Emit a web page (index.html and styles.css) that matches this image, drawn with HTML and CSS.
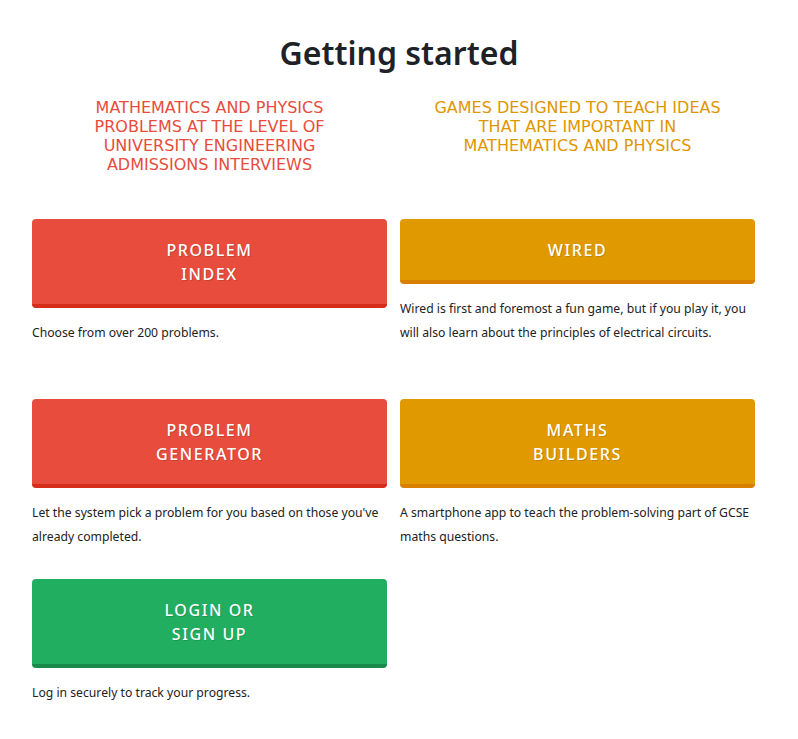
FILE: index.html
```html
<html>
	<head>
		<title>Getting started</title>
		<link rel="stylesheet" href="styles.css">
	</head>
	<body>
		<h1>Getting started</h1>
		<div class="page">
			<div class="grid">
				<div class="intro red">
					MATHEMATICS AND PHYSICS<br>
					PROBLEMS AT THE LEVEL OF<br>
					UNIVERSITY ENGINEERING<br>
					ADMISSIONS INTERVIEWS
				</div>
				<div class="intro orange">
					GAMES DESIGNED TO TEACH IDEAS<br>
					THAT ARE IMPORTANT IN<br>
					MATHEMATICS AND PHYSICS
				</div>

				<div class="cell">
					<a class="btn btn-red" href="#">PROBLEM<br>INDEX</a>
					<p>Choose from over 200 problems.</p>
				</div>
				<div class="cell">
					<a class="btn btn-orange" href="#">WIRED</a>
					<p>Wired is first and foremost a fun game, but if you play it, you will also learn about the principles of electrical circuits.</p>
				</div>

				<div class="cell">
					<a class="btn btn-red" href="#">PROBLEM<br>GENERATOR</a>
					<p>Let the system pick a problem for you based on those you've already completed.</p>
				</div>
				<div class="cell">
					<a class="btn btn-orange" href="#">MATHS<br>BUILDERS</a>
					<p>A smartphone app to teach the problem-solving part of GCSE maths questions.</p>
				</div>

				<div class="cell">
					<a class="btn btn-green" href="#">LOGIN OR<br>SIGN UP</a>
					<p>Log in securely to track your progress.</p>
				</div>
			</div>
		</div>
	</body>
</html>
```

FILE: styles.css
```css
body {
	margin: 0;
	background: #fff;
	font-family: "Noto Sans", sans-serif;
	color: #222;
}

h1 {
	margin: 0;
	padding: 32px 0 24px 0;
	font-family: "Noto Sans", sans-serif;
	font-size: 32px;
	line-height: 42px;
	font-weight: 600;
	text-align: center;
	color: #1e2226;
}

.page {
	width: 724px;
	margin: 0 0 0 32px;
}

.grid {
	display: grid;
	grid-template-columns: 355px 355px;
	column-gap: 13px;
}

.intro {
	font-family: "DejaVu Sans", sans-serif;
	font-size: 16px;
	line-height: 19px;
	text-align: center;
	margin-bottom: 45px;
}

.red {
	color: #e74c3c;
}

.orange {
	color: #e09600;
}

.cell {
	display: flex;
	flex-direction: column;
}

.btn {
	display: block;
	padding: 19px 0 18px 0;
	border-radius: 4px;
	border-bottom: 4px solid;
	color: #fff;
	text-decoration: none;
	text-align: center;
	font-size: 16px;
	line-height: 24px;
	font-weight: 500;
	letter-spacing: 1.6px;
	text-shadow: 1px 1px 0 rgba(0, 0, 0, 0.15);
}

.btn-red {
	background: #e74c3c;
	border-bottom-color: #d62c1a;
}

.btn-orange {
	background: #e09a00;
	border-bottom-color: #d97f00;
}

.btn-green {
	background: #22ae60;
	border-bottom-color: #1a8a4b;
}

.cell p {
	margin: 13px 0 30px 0;
	min-height: 48px;
	font-size: 12.2px;
	line-height: 24px;
	color: #222;
}
```
